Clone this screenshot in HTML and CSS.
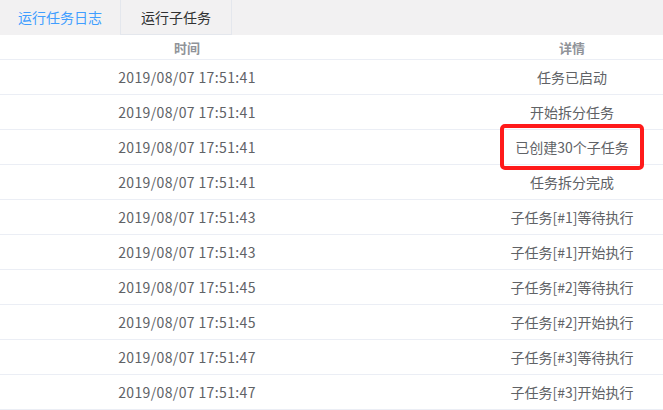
FILE: index.html
```html
<!DOCTYPE html>
<html lang="zh">
  <head>
    <meta charset="UTF-8" />
    <title>运行任务日志</title>
    <link rel="stylesheet" href="styles.css">
  </head>
  <body>
    <div class="tabs">
      <div class="tab active">运行任务日志</div>
      <div class="tab">运行子任务</div>
    </div>
    <table class="log-table">
      <thead>
        <tr><th class="col-time">时间</th><th class="col-detail">详情</th></tr>
      </thead>
      <tbody>
        <tr><td class="time">2019/08/07 17:51:41</td><td>任务已启动</td></tr>
        <tr><td class="time">2019/08/07 17:51:41</td><td>开始拆分任务</td></tr>
        <tr><td class="time">2019/08/07 17:51:41</td><td><span class="mark">已创建30个子任务</span></td></tr>
        <tr><td class="time">2019/08/07 17:51:41</td><td>任务拆分完成</td></tr>
        <tr><td class="time">2019/08/07 17:51:43</td><td>子任务[#1]等待执行</td></tr>
        <tr><td class="time">2019/08/07 17:51:43</td><td>子任务[#1]开始执行</td></tr>
        <tr><td class="time">2019/08/07 17:51:45</td><td>子任务[#2]等待执行</td></tr>
        <tr><td class="time">2019/08/07 17:51:45</td><td>子任务[#2]开始执行</td></tr>
        <tr><td class="time">2019/08/07 17:51:47</td><td>子任务[#3]等待执行</td></tr>
        <tr><td class="time">2019/08/07 17:51:47</td><td>子任务[#3]开始执行</td></tr>
      </tbody>
    </table>
  </body>
</html>
```

FILE: styles.css
```css
body {
  margin: 0;
  font-family: "Noto Sans CJK SC", "Noto Sans", sans-serif;
  font-size: 14px;
  color: #606266;
  background: #fff;
  overflow: hidden;
}

.tabs {
  display: flex;
  height: 35px;
  background: #f2f1f2;
}

.tab {
  box-sizing: border-box;
  height: 35px;
  line-height: 34px;
  text-align: center;
  color: #303133;
}

.tab.active {
  width: 120px;
  color: #409eff;
}

.tab + .tab {
  width: 112px;
  border-left: 1px solid #e4e7ed;
  border-right: 1px solid #e4e7ed;
  border-bottom: 1px solid #e4e7ed;
}

.log-table {
  width: 770px;
  border-collapse: collapse;
  table-layout: fixed;
}

.log-table th,
.log-table td {
  padding: 0;
  text-align: center;
  border-bottom: 1px solid #ebeef5;
}

.log-table th {
  height: 24px;
  color: #909399;
  font-weight: bold;
  font-size: 13px;
}

.col-time {
  width: 374px;
}

.log-table td {
  height: 34px;
  line-height: 20px;
}

.log-table td.time {
  letter-spacing: 0.37px;
}

.mark {
  display: inline-block;
  margin: -12px 0;
  padding: 9px 11px;
  border: 4px solid #ff1a1a;
  border-radius: 5px;
}
```
